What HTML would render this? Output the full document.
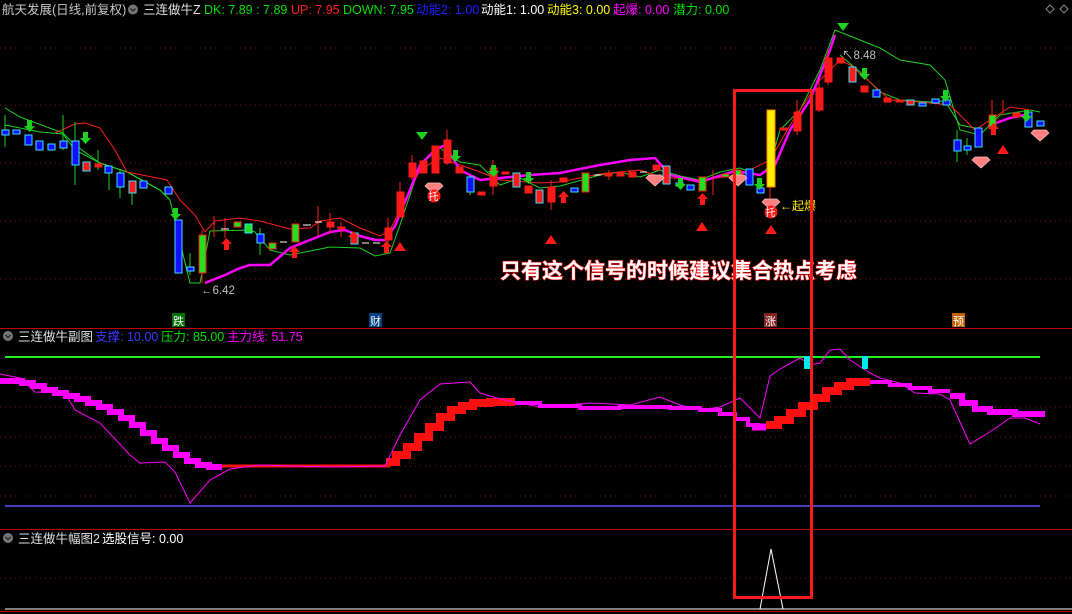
<!DOCTYPE html>
<html><head><meta charset="utf-8"><style>
html,body{margin:0;padding:0;background:#000;width:1072px;height:614px;overflow:hidden}
svg{display:block;font-family:"Liberation Sans","Noto Sans CJK SC",sans-serif}
</style></head><body>
<svg width="1072" height="614" viewBox="0 0 1072 614" xmlns="http://www.w3.org/2000/svg">
<rect width="1072" height="614" fill="#000"/>
<g font-size="12.5">
<text x="2" y="14" fill="#c8c8c8">航天发展(日线,前复权)</text>
<circle cx="133" cy="9.5" r="5" fill="#777"/><path d="M130.5 8.5 L133 11 L135.5 8.5" stroke="#222" stroke-width="1.3" fill="none"/>
<text x="143" y="14" fill="#e0e0e0">三连做牛Z</text>
<text x="204" y="14" fill="#00e000">DK: 7.89  : 7.89</text>
<text x="291" y="14" fill="#ff2020">UP: 7.95</text>
<text x="343" y="14" fill="#00e000">DOWN: 7.95</text>
<text x="416" y="14" fill="#1f1fff">动能2: 1.00</text>
<text x="481" y="14" fill="#ffffff">动能1: 1.00</text>
<text x="547" y="14" fill="#ffff00">动能3: 0.00</text>
<text x="613" y="14" fill="#ff00ff">起爆: 0.00</text>
<text x="673" y="14" fill="#00e000">潜力: 0.00</text>
</g>
<path d="M1050 5 l4 4 l-4 4 l-4 -4z M1064 5 l4 4 l-4 4 l-4 -4z" stroke="#888" fill="none"/>
<g stroke="#8a1010" stroke-dasharray="1,4">
<line x1="0" y1="48" x2="1072" y2="48"/><line x1="0" y1="105" x2="1072" y2="105"/><line x1="0" y1="163" x2="1072" y2="163"/><line x1="0" y1="221" x2="1072" y2="221"/><line x1="0" y1="279" x2="1072" y2="279"/>
<line x1="0" y1="378" x2="1072" y2="378"/><line x1="0" y1="407" x2="1072" y2="407"/><line x1="0" y1="437" x2="1072" y2="437"/><line x1="0" y1="466" x2="1072" y2="466"/><line x1="0" y1="496" x2="1072" y2="496"/>
<line x1="0" y1="578" x2="1072" y2="578"/>
</g>
<polyline fill="none" stroke="#20d020" stroke-width="1" points="5,108 20,117 63,133 75,145 100,163 127,172 160,190 170,200 177,230 190,283 200,283 210,231 250,230 255,232 270,250 290,255 330,247 360,248 375,256 390,253 400,225 420,165 440,148 460,162 480,165 500,185 520,178 540,188 560,186 600,175 620,172 640,177 660,170 680,176 700,180 720,172 740,168 760,176 770,165 780,130 800,110 820,70 835,30 850,36 880,48 900,60 930,65 945,80 960,130 980,135 1000,115 1030,110 1040,112"/>
<polyline fill="none" stroke="#20d020" stroke-width="1" points="5,125 40,132 63,134 75,150 100,163 127,172 160,190 170,200"/>
<polyline fill="none" stroke="#20d020" stroke-width="1" points="840,55 860,72 880,92 900,100 930,102 945,101 960,125 975,128"/>
<polyline fill="none" stroke="#ff2020" stroke-width="1" points="55,133 75,124 85,123 100,128 115,150 127,172 167,180 180,200 195,215 205,232 215,221 240,218 260,221 290,229 310,228 320,221 340,218 360,228 380,236 390,230 400,210 420,170 440,158 460,165 480,172 500,180 540,183 560,182 600,174 640,170 660,177 700,180 740,175 770,160 790,125 800,110 820,80 840,60 850,65 870,82 890,100 920,102 950,105 975,130 990,120 1010,107 1030,110"/>
<polyline fill="none" stroke="#ff00ff" stroke-width="2.5" points="205,283 225,275 240,268 250,265 270,265 290,248 310,240 330,232 345,230 360,236 375,240 385,240 395,226 410,190 420,165 435,150 445,145 460,170 480,180 500,178 530,175 560,173 600,165 630,160 655,158 670,175 700,182 735,171 760,175 775,165 790,130 810,100 830,50 835,35"/>
<polyline fill="none" stroke="#ff00ff" stroke-width="2.5" points="988,126 1010,118 1025,115"/>
<g stroke-width="1">
<g stroke="#20d020"><line x1="5" y1="115" x2="5" y2="147"/><line x1="63" y1="115" x2="63" y2="150"/><line x1="75" y1="122" x2="75" y2="185"/><line x1="98" y1="150" x2="98" y2="170"/><line x1="109" y1="167" x2="109" y2="190"/><line x1="120" y1="170" x2="120" y2="198"/><line x1="132" y1="185" x2="132" y2="205"/><line x1="190" y1="253" x2="190" y2="275"/><line x1="260" y1="228" x2="260" y2="255"/><line x1="470" y1="175" x2="470" y2="195"/><line x1="957" y1="130" x2="957" y2="162"/><line x1="967" y1="138" x2="967" y2="155"/></g>
<g stroke="#ff2020"><line x1="202" y1="230" x2="202" y2="283"/><line x1="214" y1="216" x2="214" y2="237"/><line x1="225" y1="218" x2="225" y2="238"/><line x1="330" y1="213" x2="330" y2="234"/><line x1="341" y1="222" x2="341" y2="237"/><line x1="318" y1="206" x2="318" y2="236"/><line x1="388" y1="218" x2="388" y2="248"/><line x1="400" y1="182" x2="400" y2="217"/><line x1="412" y1="155" x2="412" y2="180"/><line x1="447" y1="130" x2="447" y2="165"/><line x1="493" y1="160" x2="493" y2="195"/><line x1="551" y1="180" x2="551" y2="210"/><line x1="609" y1="170" x2="609" y2="180"/><line x1="713" y1="170" x2="713" y2="195"/><line x1="770" y1="180" x2="770" y2="200"/><line x1="797" y1="100" x2="797" y2="135"/><line x1="819" y1="80" x2="819" y2="112"/><line x1="828" y1="50" x2="828" y2="85"/><line x1="992" y1="100" x2="992" y2="130"/><line x1="1003" y1="100" x2="1003" y2="115"/></g>
<g fill="#1010ff" stroke="#40e0ff">
<rect x="2" y="130" width="7" height="5"/><rect x="13" y="130" width="7" height="4"/><rect x="25" y="135" width="7" height="10"/><rect x="36" y="141" width="7" height="9"/><rect x="48" y="144" width="7" height="6"/><rect x="60" y="141" width="7" height="7"/><rect x="72" y="141" width="7" height="24"/><rect x="105" y="166" width="7" height="7"/><rect x="117" y="173" width="7" height="14"/><rect x="140" y="181" width="7" height="7"/><rect x="165" y="187" width="7" height="7"/><rect x="175" y="220" width="7" height="53"/><rect x="187" y="267" width="7" height="4"/><rect x="257" y="234" width="7" height="9"/><rect x="467" y="177" width="7" height="15"/><rect x="571" y="188" width="7" height="4"/><rect x="676" y="183" width="7" height="3"/><rect x="687" y="185" width="7" height="5"/><rect x="746" y="169" width="7" height="16"/><rect x="757" y="188" width="7" height="5"/><rect x="873" y="90" width="7" height="7"/><rect x="919" y="103" width="7" height="3"/><rect x="932" y="99" width="7" height="4"/><rect x="943" y="100" width="7" height="5"/><rect x="954" y="140" width="7" height="11"/><rect x="964" y="146" width="7" height="4"/><rect x="975" y="128" width="7" height="19"/><rect x="1025" y="112" width="7" height="15"/><rect x="1037" y="121" width="7" height="5"/>
</g>
<g fill="#ff1a1a" stroke="#ff1a1a">
<rect x="83" y="162" width="7" height="9" stroke="#40e0ff"/><rect x="95" y="164" width="7" height="3"/><rect x="129" y="181" width="7" height="12" stroke="#40e0ff"/><rect x="327" y="222" width="7" height="5"/><rect x="338" y="227" width="7" height="2"/><rect x="351" y="233" width="7" height="11" stroke="#40e0ff"/><rect x="385" y="228" width="7" height="12"/><rect x="397" y="192" width="7" height="25"/><rect x="409" y="163" width="7" height="14"/><rect x="420" y="161" width="7" height="12"/><rect x="432" y="146" width="7" height="27"/><rect x="444" y="140" width="7" height="23"/><rect x="456" y="167" width="7" height="6"/><rect x="478" y="192" width="7" height="3"/><rect x="490" y="168" width="7" height="18"/><rect x="502" y="172" width="7" height="2"/><rect x="513" y="173" width="7" height="14" stroke="#40e0ff"/><rect x="525" y="186" width="7" height="7"/><rect x="536" y="190" width="7" height="13" stroke="#40e0ff"/><rect x="548" y="187" width="7" height="15"/><rect x="560" y="178" width="7" height="4"/><rect x="605" y="173" width="7" height="3"/><rect x="617" y="173" width="7" height="3"/><rect x="629" y="172" width="7" height="5"/><rect x="653" y="165" width="7" height="5"/><rect x="663" y="166" width="7" height="18" stroke="#40e0ff"/><rect x="780" y="128" width="7" height="2"/><rect x="794" y="112" width="7" height="19"/><rect x="816" y="88" width="7" height="22"/><rect x="825" y="58" width="7" height="24"/><rect x="837" y="58" width="7" height="5"/><rect x="849" y="67" width="7" height="15" stroke="#40e0ff"/><rect x="861" y="86" width="7" height="6"/><rect x="884" y="98" width="7" height="4"/><rect x="896" y="100" width="7" height="2"/><rect x="907" y="100" width="7" height="5" stroke="#40e0ff"/><rect x="1013" y="113" width="7" height="4"/>
</g>
<g fill="#20e020" stroke="#ff1a1a">
<rect x="199" y="235" width="7" height="38"/><rect x="234" y="222" width="7" height="5"/><rect x="245" y="224" width="7" height="9" stroke="#40e0ff"/><rect x="269" y="243" width="7" height="6"/><rect x="292" y="224" width="7" height="18"/><rect x="582" y="173" width="7" height="19"/><rect x="699" y="177" width="7" height="14"/><rect x="722" y="174" width="7" height="3"/><rect x="734" y="170" width="7" height="8"/><rect x="989" y="115" width="7" height="12"/>
</g>
<g stroke="#fff"><line x1="221" y1="229" x2="229" y2="229"/><line x1="280" y1="242" x2="287" y2="242"/><line x1="303" y1="225" x2="311" y2="225"/><line x1="315" y1="222" x2="322" y2="222"/><line x1="362" y1="243" x2="369" y2="243"/><line x1="373" y1="243" x2="380" y2="243"/><line x1="640" y1="172" x2="647" y2="172"/><line x1="594" y1="175" x2="601" y2="175"/></g>
<rect x="767" y="110" width="8" height="77" fill="#ffee00" stroke="#ff8800"/>
</g>
<g fill="#20d020">
<path d="M416 132h12l-6 8z M837 23h12l-6 8z"/>
<path d="M27 120h5v6h3l-5.5 6l-5.5-6h3z M83 132h5v6h3l-5.5 6l-5.5-6h3z M173 208h5v6h3l-5.5 6l-5.5-6h3z M453 150h5v6h3l-5.5 6l-5.5-6h3z M491 165h5v6h3l-5.5 6l-5.5-6h3z M526 172h5v6h3l-5.5 6l-5.5-6h3z M678 178h5v6h3l-5.5 6l-5.5-6h3z M757 178h5v6h3l-5.5 6l-5.5-6h3z M862 68h5v6h3l-5.5 6l-5.5-6h3z M943 90h5v6h3l-5.5 6l-5.5-6h3z M1024 110h5v6h3l-5.5 6l-5.5-6h3z"/>
</g>
<g fill="#ff1a1a">
<path d="M224 250h5v-6h3l-5.5-6l-5.5 6h3z M292 258h5v-6h3l-5.5-6l-5.5 6h3z M351 243h5v-6h3l-5.5-6l-5.5 6h3z M384 253h5v-6h3l-5.5-6l-5.5 6h3z M561 203h5v-6h3l-5.5-6l-5.5 6h3z M700 205h5v-6h3l-5.5-6l-5.5 6h3z M991 135h5v-6h3l-5.5-6l-5.5 6h3z"/>
<path d="M394 251h12l-6-9z M545 244h12l-6-9z M696 231h12l-6-9z M765 234h12l-6-9z M997 154h12l-6-9z"/>
</g>
<g fill="#ff8080" stroke="#ffc0c0" stroke-width="0.7">
<path d="M428 183h12l3 3l-9 8l-9-8z M649 175h12l3 3l-9 8l-9-8z M732 175h12l3 3l-9 8l-9-8z M765 199h12l3 3l-9 8l-9-8z M975 157h12l3 3l-9 8l-9-8z M1034 130h12l3 3l-9 8l-9-8z"/>
</g>
<g font-size="10" fill="#fff"><circle cx="434" cy="196" r="6.5" fill="#ff1a1a"/><text x="428.5" y="200">托</text><circle cx="771" cy="212" r="6.5" fill="#ff1a1a"/><text x="765.5" y="216">托</text></g>
<text x="780" y="210" font-size="12" fill="#ffee00">←起爆</text>
<text x="201" y="294" font-size="11.5" fill="#c0c0c0">←6.42</text>
<text x="842" y="59" font-size="11.5" fill="#c0c0c0">↖8.48</text>
<text x="500" y="278" font-size="21" font-weight="bold" fill="#fff" stroke="#ff1a1a" stroke-width="1.2" paint-order="stroke">只有这个信号的时候建议集合热点考虑</text>
<g font-size="11"><rect x="172" y="313" width="13" height="14" fill="#007000"/><text x="173" y="325" fill="#fff">跌</text>
<rect x="369" y="313" width="13" height="14" fill="#004080"/><text x="370" y="325" fill="#fff">财</text>
<rect x="764" y="313" width="13" height="14" fill="#802020"/><text x="765" y="325" fill="#fff">涨</text>
<rect x="952" y="313" width="13" height="14" fill="#c06000"/><text x="953" y="325" fill="#fff">预</text></g>
<line x1="0" y1="328.5" x2="1072" y2="328.5" stroke="#c00000"/>
<g font-size="12.5">
<circle cx="8" cy="336" r="5" fill="#777"/><path d="M5.5 335 L8 337.5 L10.5 335" stroke="#222" stroke-width="1.3" fill="none"/>
<text x="18" y="341" fill="#e0e0e0">三连做牛副图</text>
<text x="95" y="341" fill="#3a3aff">支撑: 10.00</text>
<text x="161" y="341" fill="#00e000">压力: 85.00</text>
<text x="227" y="341" fill="#ff00ff">主力线: 51.75</text>
</g>
<line x1="5" y1="357" x2="1040" y2="357" stroke="#20f020" stroke-width="2"/>
<line x1="5" y1="506" x2="1040" y2="506" stroke="#4040c0" stroke-width="2"/>
<path fill="none" stroke="#ff00ff" stroke-width="6" stroke-linejoin="miter" d="M0 381 H22 V383 H33 V386 H44 V390 H55 V393 H66 V396 H77 V399 H88 V403 H99 V407 H110 V412 H121 V418 H132 V425 H143 V433 H154 V441 H165 V448 H176 V455 H187 V461 H198 V465 H209 V467 H222"/>
<path fill="none" stroke="#ff1010" stroke-width="3" d="M222 466 H390"/>
<path fill="none" stroke="#ff1010" stroke-width="8" d="M386 462 H396 V455 H407 V447 H418 V437 H429 V427 H440 V417 H451 V410 H462 V406 H473 V403 H490 V402 H515"/>
<path fill="none" stroke="#ff00ff" stroke-width="4" d="M515 403 H540 V406 H580 V408 H620 V407 H670 V408 H700 V410 H720 V414 H735 V419 H748 V425 H760"/>
<path fill="none" stroke="#ff00ff" stroke-width="7" d="M752 427 H766"/>
<path fill="none" stroke="#ff1010" stroke-width="8" d="M766 425 H778 V420 H790 V413 H802 V406 H814 V398 H826 V391 H838 V386 H850 V382 H870"/>
<path fill="none" stroke="#ff00ff" stroke-width="4" d="M870 382 H890 V385 H910 V388 H930 V391 H950"/>
<path fill="none" stroke="#ff00ff" stroke-width="6" d="M950 396 H962 V403 H975 V409 H990 V412 H1015 V414 H1045"/>
<polyline fill="none" stroke="#ff00ff" stroke-width="1" points="0,374 20,378 35,392 65,393 75,410 100,423 130,455 140,463 165,462 175,472 190,503 210,480 230,469 260,465 290,466 330,467 385,466 400,435 420,400 440,384 470,382 480,393 490,396 505,400 540,407 590,403 630,405 660,397 680,405 700,410 720,407 740,398 760,418 770,376 780,369 800,358 810,365 820,363 830,350 840,349 850,360 870,373 880,378 900,383 915,393 940,394 950,400 970,444 985,435 1000,425 1010,418 1025,418 1040,424"/>
<rect x="804" y="356" width="6" height="13" fill="#00e8f0"/><rect x="862" y="356" width="6" height="13" fill="#00e8f0"/>
<line x1="0" y1="529.5" x2="1072" y2="529.5" stroke="#c00000"/>
<g font-size="12.5">
<circle cx="8" cy="538" r="5" fill="#777"/><path d="M5.5 537 L8 539.5 L10.5 537" stroke="#222" stroke-width="1.3" fill="none"/>
<text x="18" y="543" fill="#e0e0e0">三连做牛幅图2</text>
<text x="102" y="543" fill="#fff">选股信号: 0.00</text>
</g>
<path d="M760 609 L771 549 L783 609" fill="none" stroke="#fff" stroke-width="1"/>
<line x1="5" y1="609" x2="1072" y2="609" stroke="#fff"/>
<line x1="0" y1="611.5" x2="1072" y2="611.5" stroke="#c00000"/>
<rect x="734.5" y="90.5" width="77" height="507" fill="none" stroke="#ff1a1a" stroke-width="3"/>
</svg>
</body></html>
